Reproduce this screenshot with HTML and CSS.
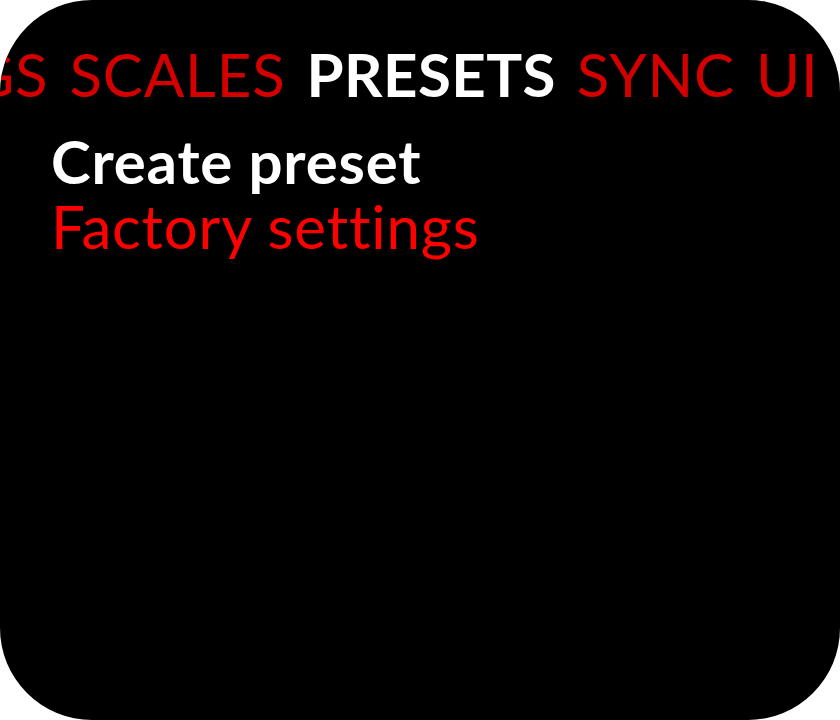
FILE: index.html
```html
<!DOCTYPE html>
<html>
<head>
<meta charset="utf-8">
<link rel="stylesheet" href="styles.css">
</head>
<body>
<div class="screen">
  <div class="tabs">
    <div class="strip">
      <span class="tab">SETTINGS</span>
      <span class="tab">SCALES</span>
      <span class="tab active">PRESETS</span>
      <span class="tab">SYNC</span>
      <span class="tab">UI</span>
      <span class="tab">CONFIG</span>
    </div>
  </div>
  <div class="menu">
    <div class="item active">Create preset</div>
    <div class="item">Factory settings</div>
  </div>
</div>
</body>
</html>
```
FILE: styles.css
```css
html, body {
  margin: 0;
  padding: 0;
  background: #ffffff;
}
.screen {
  width: 840px;
  height: 720px;
  background: #000000;
  border-radius: 92px;
  overflow: hidden;
  font-family: Lato, "Noto Sans", sans-serif;
  font-size: 60px;
  line-height: 65px;
  letter-spacing: 0.8px;
  font-variant-ligatures: none;
}
.tabs {
  padding-top: 42px;
  overflow: hidden;
}
.strip {
  display: flex;
  gap: 21px;
  white-space: nowrap;
  margin-left: -235px;
}
.tab {
  flex: none;
  color: #d40000;
  font-weight: 400;
}
.tab.active {
  color: #ffffff;
  font-weight: 700;
  letter-spacing: 0.4px;
}
.menu {
  padding-top: 22px;
  padding-left: 51px;
}
.item {
  color: #ff0000;
  font-weight: 400;
}
.item.active {
  color: #ffffff;
  font-weight: 700;
}
```
